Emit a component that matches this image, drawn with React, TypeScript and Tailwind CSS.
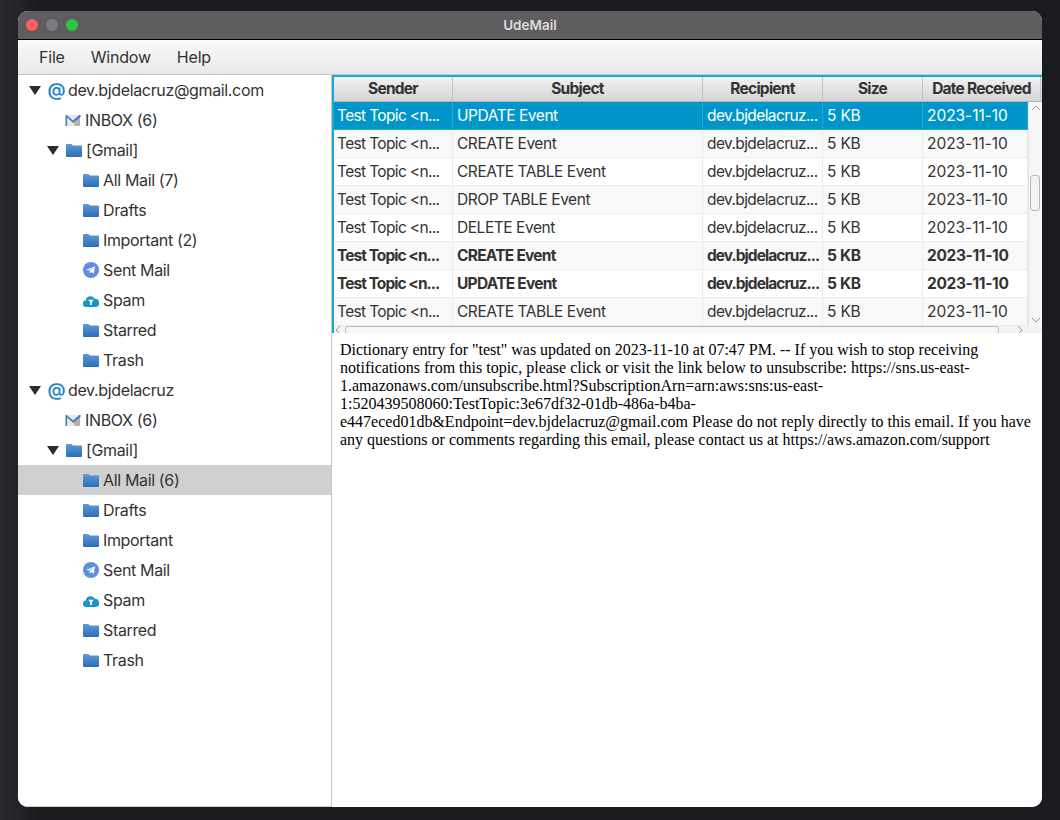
import React from "react";

const SANS = "font-['Inter','Liberation_Sans',sans-serif]";

function Arrow() {
  return (
    <svg width="12" height="9" viewBox="0 0 12 9" className="shrink-0">
      <path d="M0 0h12L6 9z" fill="#2b2b2b" />
    </svg>
  );
}

function Folder() {
  return (
    <svg width="16" height="14" viewBox="0 0 16 14" className="shrink-0">
      <defs>
        <linearGradient id="folder-fill" x1="0" y1="0" x2="0" y2="1">
          <stop offset="0" stopColor="#5c9ad9" />
          <stop offset="1" stopColor="#2f6db6" />
        </linearGradient>
      </defs>
      <path d="M0 2a1 1 0 0 1 1-1h4.5l1.5 1.6h8a1 1 0 0 1 1 1V13a1 1 0 0 1-1 1H1a1 1 0 0 1-1-1z" fill="url(#folder-fill)" />
    </svg>
  );
}

function GmailIcon() {
  return (
    <svg width="16" height="12" viewBox="0 0 16 12" className="shrink-0">
      <path d="M1 1h14v11H1z" fill="#ece8df" />
      <path d="M15 1v11H10L8 8z" fill="#b5b1a8" />
      <path d="M0.5 12V1h1.2L8 6.6 14.3 1h1.2v2L8 8.8 2.1 3.6V12z" fill="#3f7ad6" />
    </svg>
  );
}

function AtIcon() {
  return (
    <span className={`w-[17px] shrink-0 text-center text-[18px] font-semibold leading-none text-[#1f87c9] ${SANS}`}>@</span>
  );
}

function SentIcon() {
  return (
    <svg width="16" height="16" viewBox="0 0 16 16" className="shrink-0">
      <circle cx="8" cy="8" r="8" fill="#5f8fdc" />
      <path d="M3 7.9 12 4.3 10.7 11.8 8.2 10l-1.3 1.6-.4-2.6 4-3.6-5 3z" fill="#fff" />
    </svg>
  );
}

function SpamIcon() {
  return (
    <svg width="16" height="13" viewBox="0 0 16 13" className="shrink-0">
      <path d="M3.4 13A3.2 3.2 0 0 1 2.8 6.4 4.8 4.8 0 0 1 11.8 4.8 4.1 4.1 0 0 1 12.4 13z" fill="#1c93c9" />
      <path d="M5.2 5.8h5.6L8.9 8.2V11H7.1V8.2z" fill="#fff" />
    </svg>
  );
}

type Node = { label: string; indent: number; arrow?: boolean; icon: React.ReactNode; selected?: boolean };

function account(name: string, allMail: string, important: string, selectAll: boolean): Node[] {
  return [
    { label: name, indent: 11, arrow: true, icon: <AtIcon /> },
    { label: "INBOX (6)", indent: 47, icon: <GmailIcon /> },
    { label: "[Gmail]", indent: 29, arrow: true, icon: <Folder /> },
    { label: allMail, indent: 65, icon: <Folder />, selected: selectAll },
    { label: "Drafts", indent: 65, icon: <Folder /> },
    { label: important, indent: 65, icon: <Folder /> },
    { label: "Sent Mail", indent: 65, icon: <SentIcon /> },
    { label: "Spam", indent: 65, icon: <SpamIcon /> },
    { label: "Starred", indent: 65, icon: <Folder /> },
    { label: "Trash", indent: 65, icon: <Folder /> },
  ];
}

const tree: Node[] = [
  ...account("dev.bjdelacruz@gmail.com", "All Mail (7)", "Important (2)", false),
  ...account("dev.bjdelacruz", "All Mail (6)", "Important", true),
];

const rows = [
  { subject: "UPDATE Event", selected: true },
  { subject: "CREATE Event" },
  { subject: "CREATE TABLE Event" },
  { subject: "DROP TABLE Event" },
  { subject: "DELETE Event" },
  { subject: "CREATE Event", bold: true },
  { subject: "UPDATE Event", bold: true },
  { subject: "CREATE TABLE Event" },
];

const columns = [
  { name: "Sender", width: "w-[119px]" },
  { name: "Subject", width: "w-[250px]" },
  { name: "Recipient", width: "w-[120px]" },
  { name: "Size", width: "w-[100px]" },
  { name: "Date Received", width: "w-[118px]" },
];

function Row({ subject, selected, bold, odd }: { subject: string; selected?: boolean; bold?: boolean; odd: boolean }) {
  const cells = ["Test Topic <n...", subject, "dev.bjdelacruz...", "5 KB", "2023-11-10"];
  const widths = ["w-[119px] pl-[3px]", "w-[250px] pl-[4px]", "w-[120px] pl-[4px]", "w-[100px] pl-[4px]", "flex-1 pl-[4px]"];
  const spacing = bold
    ? ["tracking-[-0.95px]", "tracking-[-0.75px]", "tracking-[-0.95px]", "tracking-[-0.3px]", "tracking-[-0.35px]"]
    : ["tracking-[-0.65px]", "tracking-[-0.45px]", "tracking-[-0.6px]", "tracking-[-0.2px]", "tracking-[-0.05px]"];
  return (
    <div
      className={`flex h-[28px] border-b ${
        selected
          ? "border-[#2aa5d6] bg-[#0096c9] text-white"
          : `border-[#ececec] text-[#333] ${odd ? "bg-white" : "bg-[#f9f9f9]"}`
      } ${bold ? "font-bold" : ""}`}
    >
      {cells.map((text, i) => (
        <div
          key={i}
          className={`${widths[i]} ${spacing[i]} flex items-center overflow-hidden whitespace-nowrap border-r ${
            selected ? "border-[#2aa5d6]" : "border-[#ececec]"
          }`}
        >
          {text}
        </div>
      ))}
    </div>
  );
}

export default function App() {
  return (
    <div className={`h-[820px] w-[1060px] overflow-hidden bg-[linear-gradient(90deg,#2a2b2f_0px,#1a1b1e_40px,#1a1b1e_100%)] pl-[18px] pt-[11px] ${SANS}`}>
      <div className="flex h-[796px] w-[1024px] flex-col overflow-hidden rounded-[10px] bg-white">
        {/* title bar */}
        <div className="relative flex h-[29px] shrink-0 items-center border-b border-black bg-[#5f5d60] pl-[8px]">
          <div className="flex gap-[8px]">
            <span className="h-[12px] w-[12px] rounded-full bg-[#fe5f57]" />
            <span className="h-[12px] w-[12px] rounded-full bg-[#7c7a7e]" />
            <span className="h-[12px] w-[12px] rounded-full bg-[#2ac83f]" />
          </div>
          <span className="flex-1 pr-[60px] text-center text-[13.5px] font-semibold text-[#dcdcdc]">UdeMail</span>
        </div>

        {/* menu bar */}
        <div className="flex h-[35px] shrink-0 items-center gap-[26px] border-b border-[#c8c8c8] bg-[linear-gradient(#f9f9f9,#e9e9e9)] pl-[21px] text-[16px] tracking-[-0.2px] text-[#333]">
          <span>File</span>
          <span>Window</span>
          <span>Help</span>
        </div>

        <div className="flex min-h-0 flex-1">
          {/* folder tree */}
          <div className="w-[314px] shrink-0 border-b border-r border-[#c8c8c8] bg-white text-[16px] tracking-[-0.35px] text-[#333]">
            {tree.map((n, i) => (
              <div
                key={i}
                className={`flex h-[30px] items-center ${n.selected ? "bg-[#d0d0d0]" : ""}`}
                style={{ paddingLeft: n.indent }}
              >
                {n.arrow && <Arrow />}
                <span className={`${n.arrow ? "ml-[7px]" : ""} flex w-[16px] shrink-0 justify-center`}>{n.icon}</span>
                <span className="ml-[4px] whitespace-nowrap">{n.label}</span>
              </div>
            ))}
          </div>

          <div className="flex min-w-0 flex-1 flex-col">
            {/* message table */}
            <div className="relative h-[258px] shrink-0 overflow-hidden border-l-2 border-t-2 border-[#1ba6d8] text-[15.5px]">
              <div className="flex h-[25px] border-b border-[#b5b5b5] bg-[linear-gradient(#f2f2f2,#d5d5d5)] text-[#333]">
                {columns.map((c) => (
                  <div
                    key={c.name}
                    className={`${c.width} flex shrink-0 items-center justify-center whitespace-nowrap border-r border-[#c4c4c4] font-bold tracking-[-0.75px]`}
                  >
                    {c.name}
                  </div>
                ))}
              </div>
              <div className="mr-[14px]">
                {rows.map((r, i) => (
                  <Row key={i} subject={r.subject} selected={r.selected} bold={r.bold} odd={i % 2 === 0} />
                ))}
              </div>

              {/* vertical scrollbar */}
              <div className="absolute bottom-[7px] right-0 top-[25px] w-[14px] border-l border-[#e4e4e4] bg-[#f6f6f6]">
                <svg width="10" height="6" viewBox="0 0 10 6" className="absolute left-[2px] top-[3px]">
                  <path d="M1 5l4-4 4 4" fill="none" stroke="#9a9a9a" />
                </svg>
                <div className="absolute left-[1px] top-[73px] h-[36px] w-[10px] rounded-[3px] border border-[#b8b8b8] bg-[#f2f2f2]" />
                <svg width="10" height="6" viewBox="0 0 10 6" className="absolute bottom-[3px] left-[2px]">
                  <path d="M1 1l4 4 4-4" fill="none" stroke="#9a9a9a" />
                </svg>
              </div>

              {/* horizontal scrollbar */}
              <div className="absolute inset-x-0 bottom-0 flex h-[7px] items-start bg-[#f4f4f4]">
                <svg width="6" height="7" viewBox="0 0 6 7" className="ml-[1px] shrink-0">
                  <path d="M5 0L1 4l3 3" fill="none" stroke="#9a9a9a" />
                </svg>
                <div className="ml-[4px] h-[8px] w-[654px] shrink-0 rounded-[3px] border border-[#b8b8b8] bg-[#f6f6f6]" />
                <svg width="6" height="7" viewBox="0 0 6 7" className="ml-[18px] shrink-0">
                  <path d="M1 0l4 4-3 3" fill="none" stroke="#9a9a9a" />
                </svg>
              </div>
            </div>

            {/* message body */}
            <div className="min-h-0 flex-1 bg-white pl-[8px] pr-[2px] pt-[8px] font-['Liberation_Serif',serif] text-[16px] leading-[18px] text-black">
              Dictionary entry for "test" was updated on 2023-11-10 at 07:47 PM. -- If you wish to stop receiving notifications from this topic, please click or visit the link below to unsubscribe: https://sns.us-east-1.amazonaws.com/unsubscribe.html?SubscriptionArn=arn:aws:sns:us-east-1:520439508060:TestTopic:3e67df32-01db-486a-b4ba-e447eced01db&amp;Endpoint=dev.bjdelacruz@gmail.com Please do not reply directly to this email. If you have any questions or comments regarding this email, please contact us at https://aws.amazon.com/support
            </div>
          </div>
        </div>
      </div>
    </div>
  );
}
